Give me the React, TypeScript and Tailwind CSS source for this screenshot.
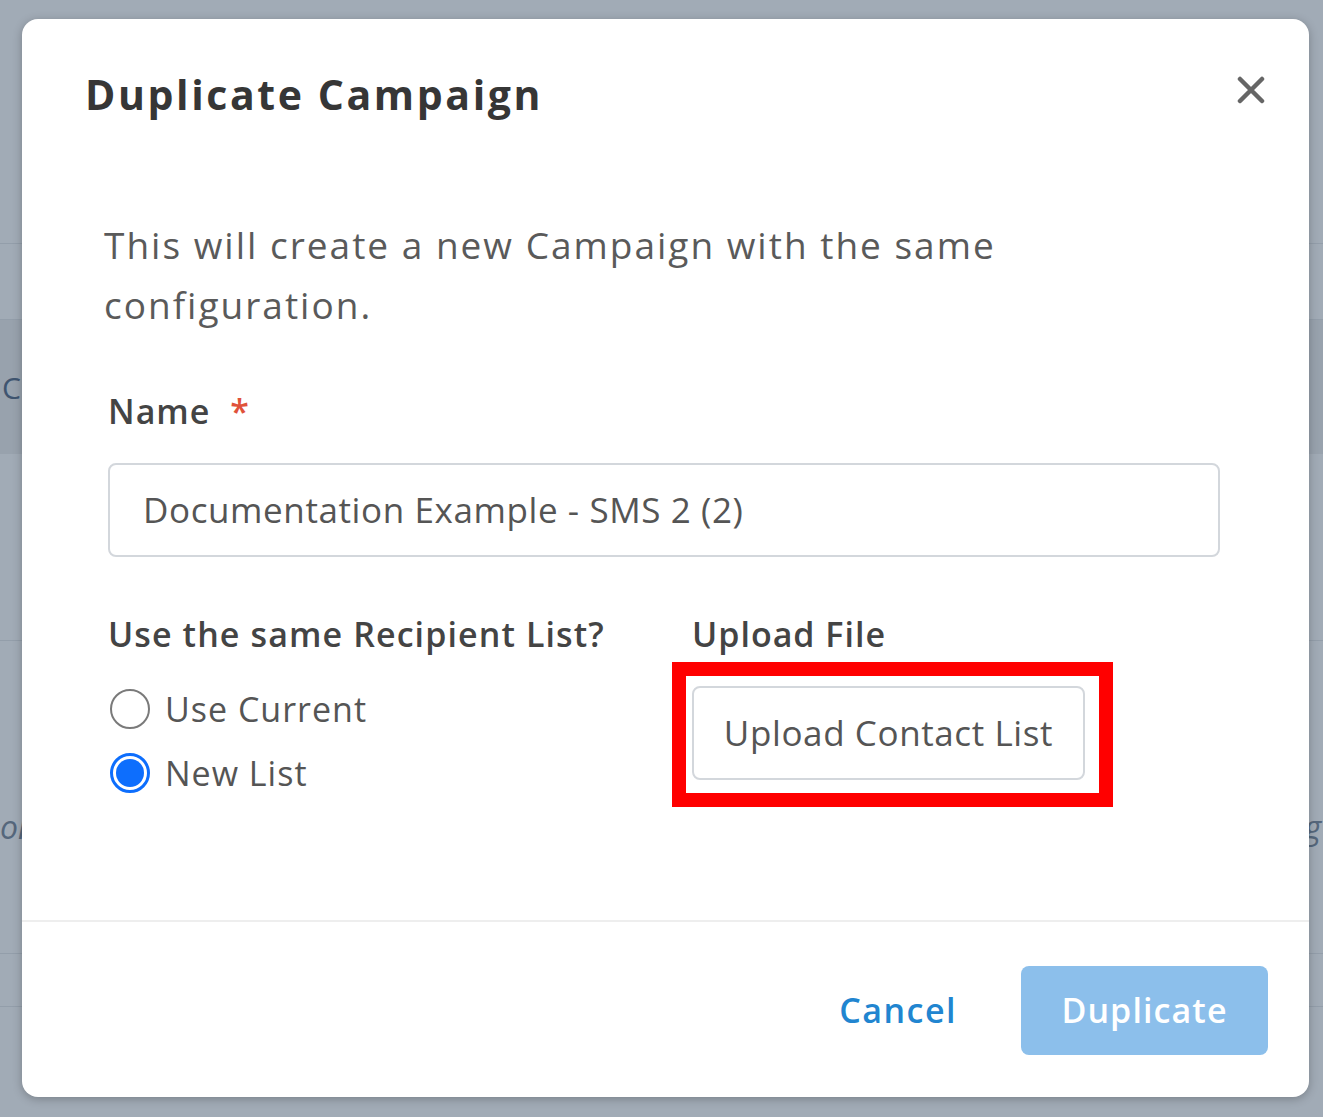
import React from "react";

function BackgroundPage() {
  return (
    <div className="flex flex-col h-[1117px] w-[1323px] bg-[#a1abb6] font-['Open_Sans',sans-serif]">
      <div className="h-[244px] border-b border-[#939eaa]" />
      <div className="h-[76px] border-b border-[#939eaa]" />
      <div className="h-[134px] bg-[#98a2ad] flex items-center pl-[2px]">
        <span className="text-[30px] text-[#3f5570] whitespace-nowrap">Co</span>
      </div>
      <div className="h-[187px] border-b border-[#939eaa]" />
      <div className="h-[313px] border-b border-[#939eaa] flex items-start justify-between pt-[170px]">
        <span className="text-[32px] italic text-[#55677c] leading-none whitespace-nowrap">on</span>
        <span className="text-[32px] italic text-[#55677c] leading-none whitespace-nowrap pr-[2px]">ng</span>
      </div>
      <div className="h-[53px] border-b border-[#939eaa]" />
      <div className="flex-1" />
    </div>
  );
}

function Radio({ checked, label }: { checked: boolean; label: string }) {
  return (
    <div className="flex items-center h-[64px] gap-[15px] pl-[2px]">
      {checked ? (
        <div className="w-[40px] h-[40px] rounded-full border-[3px] border-[#0d6efd] p-[3px] bg-white">
          <div className="w-full h-full rounded-full bg-[#0d6efd]" />
        </div>
      ) : (
        <div className="w-[40px] h-[40px] rounded-full border-2 border-[#7a7a7a] bg-white" />
      )}
      <span className="text-[34px] leading-[40px] tracking-[1px] text-[#555555]">{label}</span>
    </div>
  );
}

export default function App() {
  return (
    <div className="relative w-[1323px] h-[1117px] overflow-hidden font-['Open_Sans',sans-serif]">
      <BackgroundPage />
      <div className="absolute left-[22px] top-[19px] w-[1287px] h-[1078px] bg-white rounded-[16px] shadow-[0_2px_10px_rgba(0,0,0,0.25)] flex flex-col">
        <div className="flex items-start justify-between pt-[49px] pl-[63px] pr-[44px]">
          <h2 className="text-[41px] leading-[52px] font-bold tracking-[2.6px] text-[#363636]">Duplicate Campaign</h2>
          <button className="mt-[8px] w-[28px] h-[28px] text-[#666666]">
            <svg viewBox="0 0 28 28" className="w-[28px] h-[28px]">
              <path d="M3 3 L25 25 M25 3 L3 25" stroke="currentColor" strokeWidth="4.5" strokeLinecap="round" />
            </svg>
          </button>
        </div>

        <div className="flex-1 pl-[86px] pr-[89px] pt-[95px]">
          <p className="text-[37px] leading-[60px] tracking-[2px] text-[#5a5a5a] -ml-[4px]">
            This will create a new Campaign with the same
            <br />
            configuration.
          </p>

          <div className="mt-[56px]">
            <label className="text-[34px] leading-[40px] font-semibold tracking-[1px] text-[#444444]">
              Name <span className="text-[#e0523a] ml-[10px]">*</span>
            </label>
          </div>
          <div className="mt-[32px] h-[94px] border-2 border-[#d3d7dc] rounded-[8px] flex items-center px-[33px]">
            <span className="text-[35px] tracking-[0.6px] text-[#555555]">Documentation Example - SMS 2 (2)</span>
          </div>

          <div className="mt-[57px] grid grid-cols-[584px_1fr]">
            <div>
              <div className="text-[34px] leading-[40px] font-semibold tracking-[1.1px] text-[#444444]">Use the same Recipient List?</div>
              <div className="mt-[23px]">
                <Radio checked={false} label="Use Current" />
                <Radio checked={true} label="New List" />
              </div>
            </div>
            <div>
              <div className="text-[34px] leading-[40px] font-semibold tracking-[1px] text-[#444444]">Upload File</div>
              <div className="relative mt-[32px] w-[393px]">
                <button className="w-[393px] h-[94px] border-2 border-[#d3d7dc] rounded-[8px] bg-white text-[35px] tracking-[0.6px] text-[#555555]">
                  Upload Contact List
                </button>
                <div className="absolute -top-[24px] -left-[20px] -right-[28px] -bottom-[27px] border-[14px] border-[#ff0000] pointer-events-none" />
              </div>
            </div>
          </div>
        </div>

        <div className="border-t-2 border-[#eeeeee] flex items-center justify-end pt-[44px] pb-[42px] pr-[41px]">
          <button className="text-[34px] font-semibold tracking-[1.5px] text-[#2185d0] mr-[64px]">Cancel</button>
          <button className="w-[247px] h-[89px] rounded-[8px] bg-[#8cbfeb] text-[34px] font-semibold tracking-[1.1px] text-white">
            Duplicate
          </button>
        </div>
      </div>
    </div>
  );
}
